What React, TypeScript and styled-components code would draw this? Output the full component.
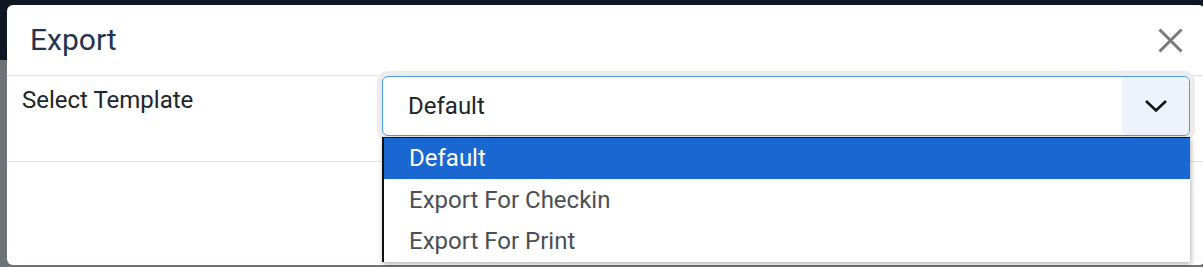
import React from 'react';
import styled, { createGlobalStyle } from 'styled-components';

const GlobalStyle = createGlobalStyle`
  html, body {
    margin: 0;
    padding: 0;
    overflow: hidden;
  }
  body {
    font-family: Roboto, "Liberation Sans", sans-serif;
  }
`

const Backdrop = styled.div`
  width: 1203px;
  height: 267px;
  overflow: hidden;
  background: linear-gradient(to bottom, #0f1722 0, #0f1722 60px, #6f7276 60px, #6f7276 100%);
  padding: 5px 0 0 7px;
  box-sizing: border-box;
`

const Modal = styled.div`
  width: 1198px;
  height: 260px;
  background: #fff;
  border-radius: 6px;
  display: flex;
  flex-direction: column;
`

const Header = styled.div`
  height: 70.5px;
  flex: none;
  padding: 0 22px 0 23px;
  display: flex;
  align-items: center;
  justify-content: space-between;
  border-bottom: 1.5px solid #dee2e6;
  box-sizing: border-box;
`

const Title = styled.h5`
  margin: 0;
  font-size: 30px;
  font-weight: 400;
  color: #233350;
  line-height: 1.2;
  padding-top: 1px;
`

const CloseButton = styled.button`
  border: 0;
  background: transparent;
  padding: 0;
  width: 25px;
  height: 25px;
  margin-top: 2px;
  display: flex;
`

const Body = styled.div`
  display: flex;
  flex: none;
  padding: 0 15px;
  height: 86.5px;
  box-sizing: border-box;
  border-bottom: 1.5px solid #dee2e6;
`

const Label = styled.label`
  width: 360px;
  flex: none;
  font-size: 24px;
  line-height: 36px;
  color: #212529;
  padding-top: 6px;
`

const SelectWrap = styled.div`
  position: relative;
  flex: 1;
  height: 60px;
`

const SelectBox = styled.div`
  height: 60px;
  box-sizing: border-box;
  border: 1.5px solid #4a9af0;
  border-radius: 6px;
  box-shadow: 0 0 0 5px #ececec;
  display: flex;
  overflow: hidden;
  background: #fff;
`

const SelectValue = styled.div`
  flex: 1;
  display: flex;
  align-items: center;
  padding-left: 25px;
  padding-top: 1px;
  font-size: 24px;
  color: #212529;
`

const Addon = styled.div`
  width: 67px;
  background: #eef3fb;
  display: flex;
  align-items: center;
  justify-content: center;
`

const Options = styled.ul`
  position: absolute;
  top: 61px;
  left: 0;
  right: 0;
  margin: 0;
  padding: 0;
  list-style: none;
  background: #fff;
  border-left: 2px solid #111;
  border-top: 1.5px solid #111;
  box-shadow: 1px 2px 5px rgba(0, 0, 0, 0.3);
  z-index: 2;
`

const Option = styled.li<{ $active?: boolean }>`
  height: 41.5px;
  display: flex;
  align-items: center;
  padding-left: 25px;
  font-size: 24px;
  background: ${p => (p.$active ? '#1a67d2' : '#fff')};
  color: ${p => (p.$active ? '#fff' : '#4a4f55')};
`

const Footer = styled.div`
  flex: 1;
`

const templates = ['Default', 'Export For Checkin', 'Export For Print']

export default function App() {
  return (
    <>
      <GlobalStyle />
      <Backdrop>
        <Modal>
          <Header>
            <Title>Export</Title>
            <CloseButton aria-label="Close">
              <svg width="25" height="25" viewBox="0 0 25 25">
                <path d="M1.5 1.5 L23.5 23.5 M23.5 1.5 L1.5 23.5" stroke="#7a7a7a" strokeWidth="3" />
              </svg>
            </CloseButton>
          </Header>
          <Body>
            <Label>Select Template</Label>
            <SelectWrap>
              <SelectBox>
                <SelectValue>Default</SelectValue>
                <Addon>
                  <svg width="24" height="14" viewBox="0 0 24 14">
                    <path d="M2 2 L12 11.5 L22 2" fill="none" stroke="#111" strokeWidth="2.6" />
                  </svg>
                </Addon>
              </SelectBox>
              <Options>
                {templates.map((t, i) => (
                  <Option key={t} $active={i === 0}>{t}</Option>
                ))}
              </Options>
            </SelectWrap>
          </Body>
          <Footer />
        </Modal>
      </Backdrop>
    </>
  );
}
